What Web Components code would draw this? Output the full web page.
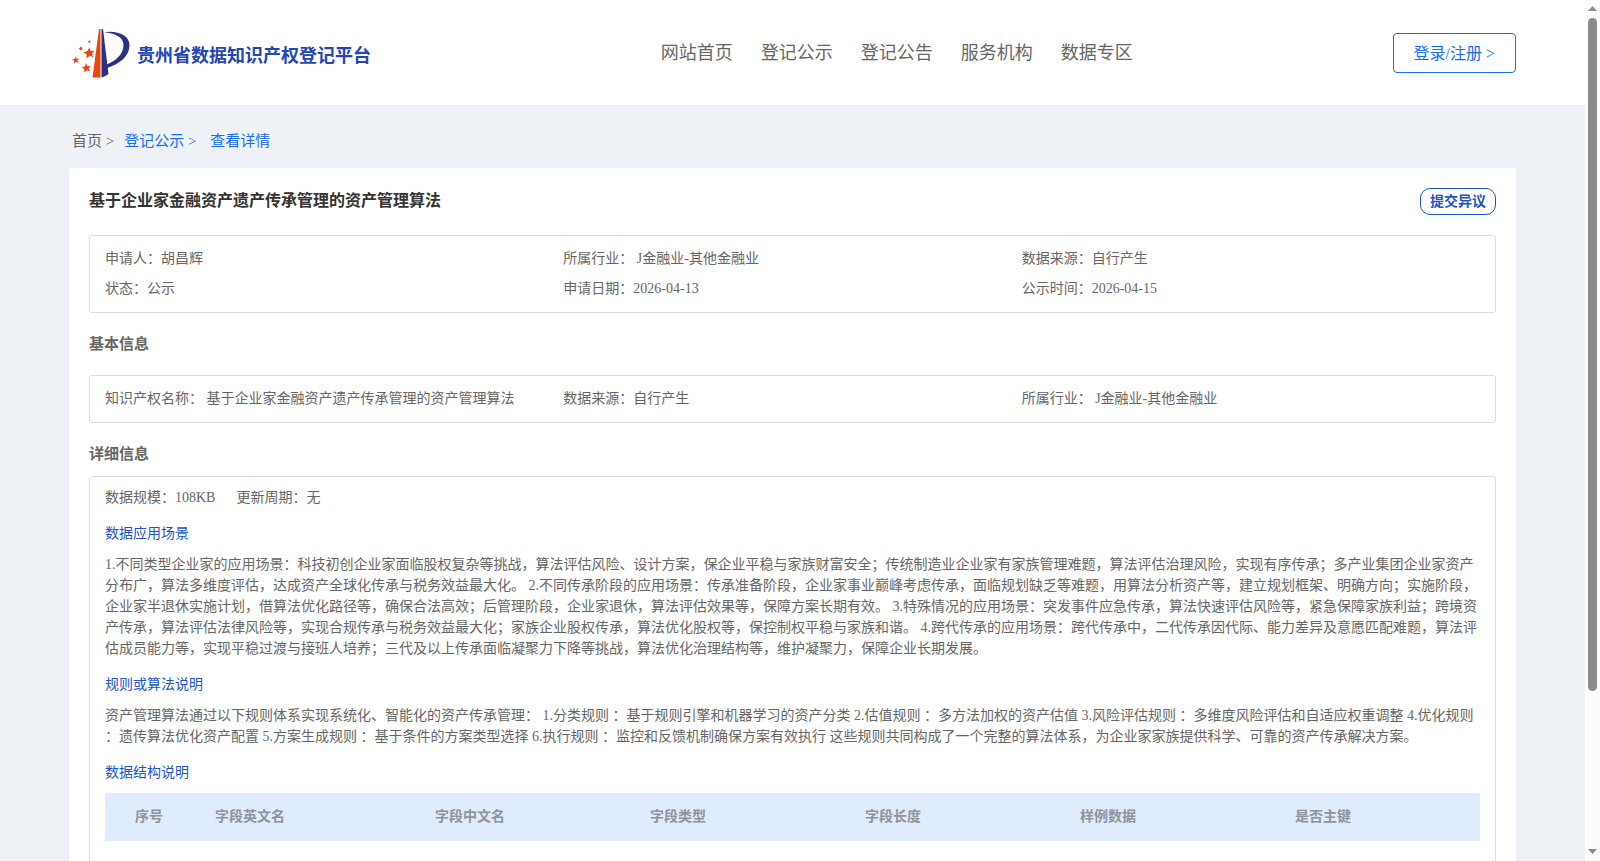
<!DOCTYPE html>
<html lang="zh-CN">
<head>
<meta charset="utf-8">
<title>贵州省数据知识产权登记平台</title>
<style>
  :root {
    --blue: #176df5;
    --blue-dark: #1a55cb;
    --text: #666;
    --line: #ddd;
    --bg: #eef2f6;
    --gutter: 69px;
  }
  body {
    margin: 0;
    color: var(--text);
    font: 14px/21px "Liberation Serif", "Noto Sans CJK SC", serif;
    text-spacing-trim: space-all;
  }
</style>
</head>
<body>
<app-shell>
  <site-header slot="header"></site-header>
  <bread-crumb></bread-crumb>
  <detail-card heading="基于企业家金融资产遗产传承管理的资产管理算法">
    <info-box>
      <info-item label="申请人：">胡昌辉</info-item>
      <info-item label="所属行业：">&nbsp;J金融业-其他金融业</info-item>
      <info-item label="数据来源：">自行产生</info-item>
      <info-item label="状态：">公示</info-item>
      <info-item label="申请日期：">2026-04-13</info-item>
      <info-item label="公示时间：">2026-04-15</info-item>
    </info-box>
    <section-title style="--after: 20px">基本信息</section-title>
    <info-box>
      <info-item label="知识产权名称：">&nbsp;基于企业家金融资产遗产传承管理的资产管理算法</info-item>
      <info-item label="数据来源：">自行产生</info-item>
      <info-item label="所属行业：">&nbsp;J金融业-其他金融业</info-item>
    </info-box>
    <section-title style="--after: 11px">详细信息</section-title>
    <detail-box>
      <info-item slot="meta" label="数据规模：">108KB</info-item>
      <info-item slot="meta" label="更新周期：">无</info-item>
      <text-block heading="数据应用场景">1.不同类型企业家的应用场景：科技初创企业家面临股权复杂等挑战，算法评估风险、设计方案，保企业平稳与家族财富安全；传统制造业企业家有家族管理难题，算法评估治理风险，实现有序传承；多产业集团企业家资产分布广，算法多维度评估，达成资产全球化传承与税务效益最大化。 2.不同传承阶段的应用场景：传承准备阶段，企业家事业巅峰考虑传承，面临规划缺乏等难题，用算法分析资产等，建立规划框架、明确方向；实施阶段，企业家半退休实施计划，借算法优化路径等，确保合法高效；后管理阶段，企业家退休，算法评估效果等，保障方案长期有效。 3.特殊情况的应用场景：突发事件应急传承，算法快速评估风险等，紧急保障家族利益；跨境资产传承，算法评估法律风险等，实现合规传承与税务效益最大化；家族企业股权传承，算法优化股权等，保控制权平稳与家族和谐。 4.跨代传承的应用场景：跨代传承中，二代传承因代际、能力差异及意愿匹配难题，算法评估成员能力等，实现平稳过渡与接班人培养；三代及以上传承面临凝聚力下降等挑战，算法优化治理结构等，维护凝聚力，保障企业长期发展。</text-block>
      <text-block heading="规则或算法说明">资产管理算法通过以下规则体系实现系统化、智能化的资产传承管理： 1.分类规则 ：基于规则引擎和机器学习的资产分类 2.估值规则 ：多方法加权的资产估值 3.风险评估规则 ：多维度风险评估和自适应权重调整 4.优化规则 ：遗传算法优化资产配置 5.方案生成规则 ：基于条件的方案类型选择 6.执行规则 ：监控和反馈机制确保方案有效执行 这些规则共同构成了一个完整的算法体系，为企业家家族提供科学、可靠的资产传承解决方案。</text-block>
      <text-block heading="数据结构说明"></text-block>
      <field-table></field-table>
    </detail-box>
  </detail-card>
</app-shell>

<script>
// attach an open shadow root filled from a template
class BaseElement extends HTMLElement {
  constructor() {
    super();
    const template = document.createElement('template');
    template.innerHTML = this.constructor.html;
    this.attachShadow({mode:'open'}).appendChild(template.content.cloneNode(true));
  }
  fill(selector, attr) {
    this.shadowRoot.querySelector(selector).textContent = this.getAttribute(attr) || '';
  }
}

class AppShell extends BaseElement {
  static html = `
    <style>
      :host { display:flex; height:100vh; background:var(--bg); }
      .scroller { flex:1; min-width:0; overflow-y:auto; scrollbar-width:none; }
      main { padding:0 var(--gutter) 40px; }
    </style>
    <div class="scroller">
      <slot name="header"></slot>
      <main><slot></slot></main>
    </div>
    <scroll-rail></scroll-rail>
  `;
}

class ScrollRail extends BaseElement {
  static html = `
    <style>
      :host { display:flex; flex-direction:column; align-items:center; width:15px; padding:6px 0 7px; box-sizing:border-box; background:#fcfcfc; }
      svg { display:block; width:9px; height:5px; fill:#8b8b8b; }
      .track { flex:1; display:flex; flex-direction:column; width:9px; padding:7px 0 0; }
      .thumb { flex:17; border-radius:5px; background:#8b8b8b; }
      .rest { flex:4; }
    </style>
    <svg viewBox="0 0 9 5"><path d="M4.5 0L9 5H0z"/></svg>
    <div class="track"><div class="thumb"></div><div class="rest"></div></div>
    <svg viewBox="0 0 9 5"><path d="M0 0h9L4.5 5z"/></svg>
  `;
}

class SiteLogo extends BaseElement {
  static html = `
    <style>
      :host { display:flex; align-items:center; gap:6px; padding:0 30px 0 3px; }
      svg { display:block; width:59px; height:50px; }
      span { padding-top:7px; color:#2446b4; font-size:18px; font-weight:bold; line-height:26px; white-space:nowrap; }
    </style>
    <svg viewBox="0 0 59 50" aria-hidden="true">
      <path fill="#e8470f" d="M27 1L28.500 1V49.500H20.500z"/>
      <path fill="#2a3087" d="M29.500 1L31 1L36.500 46Q33.500 48.500 29.500 49.500z"/>
      <path fill="#2a3087" d="M32 4.500C44 2 57.500 7 57.500 17C57.500 28 48 36 35 40L34.500 36.500C44 33 51.500 26 51.500 17C51.500 9 43 5 32 4.500z"/>
      <g fill="#e8470f">
        <path d="M17.400 19.500l1.200 3.500 4-.300-2.700 2.900 1.500 3.700-3.700-1.500-3.300 2.700.3-4.200-3.500-2.100 4-.9z"/>
        <path d="M3.800 28.500l.9 2.200 2.500-.1-1.700 1.900.8 2.500-2.300-1.200-2.100 1.700.2-2.700-2.100-1.300 2.400-.6z"/>
        <path d="M14.300 35.500l1.300 2.700 3.200-.1-2.100 2.500 1.200 3-3-1.300-2.700 2.200.1-3.500-2.800-1.700 3.300-.8z"/>
        <path d="M8.500 18.500l.9 1.100 1.400-.2-.8 1.300.6 1.500-1.600-.5-1.200 1-.1-1.700-1.300-.8 1.500-.5z"/>
        <path d="M17.300 12l.5.900 1.100-.1-.6.900.5 1.100-1.200-.4-.9.700v-1.200l-1-.6 1.100-.3z"/>
      </g>
    </svg>
    <span>贵州省数据知识产权登记平台</span>
  `;
}

class SiteHeader extends BaseElement {
  static html = `
    <style>
      :host { display:flex; align-items:center; height:105px; padding:0 var(--gutter); background:#fff; }
      nav { flex:1; display:flex; justify-content:center; gap:28px; }
      a { color:inherit; font-size:18px; line-height:26px; text-decoration:none; white-space:nowrap; }
      button { height:40px; padding:2px 20px 0; border:1px solid var(--blue); border-radius:4px; background:#fff; color:var(--blue); font:inherit; font-size:16px; white-space:nowrap; cursor:pointer; }
    </style>
    <site-logo></site-logo>
    <nav>
      <a href="#">网站首页</a>
      <a href="#">登记公示</a>
      <a href="#">登记公告</a>
      <a href="#">服务机构</a>
      <a href="#">数据专区</a>
    </nav>
    <button type="button">登录/注册 &gt;</button>
  `;
}

class BreadCrumb extends BaseElement {
  static html = `
    <style>
      :host { display:block; padding:25px 3px 16px; font-size:15px; line-height:22px; }
      nav { display:flex; gap:10px; }
      a { color:var(--blue); text-decoration:none; }
      a.home { color:var(--text); }
    </style>
    <nav>
      <a class="home" href="#">首页 &gt;</a>
      <a href="#">登记公示 &gt;&nbsp;</a>
      <a href="#">查看详情</a>
    </nav>
  `;
}

class DetailCard extends BaseElement {
  static html = `
    <style>
      :host { display:block; padding:20px; background:#fff; }
      header { display:flex; align-items:flex-start; justify-content:space-between; margin-bottom:20px; }
      h1 { margin:0; color:#333; font-size:16px; line-height:26px; }
      button { height:27px; padding:0 9px; border:1px solid var(--blue-dark); border-radius:10px; background:#fff; color:var(--blue-dark); font:inherit; font-weight:bold; cursor:pointer; }
    </style>
    <header>
      <h1></h1>
      <button type="button">提交异议</button>
    </header>
    <slot></slot>
  `;
  connectedCallback() {
    this.fill('h1', 'heading');
  }
}

class SectionTitle extends BaseElement {
  static html = `
    <style>
      :host { display:block; margin:20px 0 var(--after); }
      h2 { margin:0; font-size:15px; line-height:22px; }
    </style>
    <h2><slot></slot></h2>
  `;
}

class InfoBox extends BaseElement {
  static html = `
    <style>
      :host { display:grid; grid-template-columns:repeat(3, 1fr); padding:8px 15px; border:1px solid var(--line); border-radius:3px; line-height:30px; }
    </style>
    <slot></slot>
  `;
}

class InfoItem extends BaseElement {
  static html = `
    <style>
      :host { display:block; }
    </style>
    <span></span><slot></slot>
  `;
  connectedCallback() {
    this.fill('span', 'label');
  }
}

class DetailBox extends BaseElement {
  static html = `
    <style>
      :host { display:block; padding:10px 15px 20px; border:1px solid var(--line); border-radius:3px; }
      .meta { display:flex; gap:21px; }
    </style>
    <div class="meta"><slot name="meta"></slot></div>
    <slot></slot>
  `;
}

class TextBlock extends BaseElement {
  static html = `
    <style>
      :host { display:block; margin-top:15px; }
      h3 { margin:0 0 9px; color:var(--blue-dark); font-size:14px; font-weight:normal; line-height:22px; }
      p { margin:0; }
    </style>
    <h3></h3>
    <p><slot></slot></p>
  `;
  connectedCallback() {
    this.fill('h3', 'heading');
  }
}

class FieldTable extends BaseElement {
  static html = `
    <style>
      :host { display:block; min-height:170px; }
      table { width:100%; border-collapse:collapse; table-layout:fixed; }
      th { height:46px; padding:0 0 2px 30px; background:#dfecfe; color:#909399; text-align:left; }
      .no { width:50px; }
      .name { width:190px; }
    </style>
    <table>
      <thead><tr></tr></thead>
    </table>
  `;
  connectedCallback() {
    const row = this.shadowRoot.querySelector('tr');
    const columns = ['序号', '字段英文名', '字段中文名', '字段类型', '字段长度', '样例数据', '是否主键'];
    columns.forEach((name, i) => {
      const th = document.createElement('th');
      th.scope = 'col';
      th.textContent = name;
      if (i === 0) th.className = 'no';
      if (i === 1) th.className = 'name';
      row.appendChild(th);
    });
  }
}

customElements.define('scroll-rail', ScrollRail);
customElements.define('app-shell', AppShell);
customElements.define('site-logo', SiteLogo);
customElements.define('site-header', SiteHeader);
customElements.define('bread-crumb', BreadCrumb);
customElements.define('detail-card', DetailCard);
customElements.define('section-title', SectionTitle);
customElements.define('info-box', InfoBox);
customElements.define('info-item', InfoItem);
customElements.define('detail-box', DetailBox);
customElements.define('text-block', TextBlock);
customElements.define('field-table', FieldTable);
</script>
</body>
</html>
